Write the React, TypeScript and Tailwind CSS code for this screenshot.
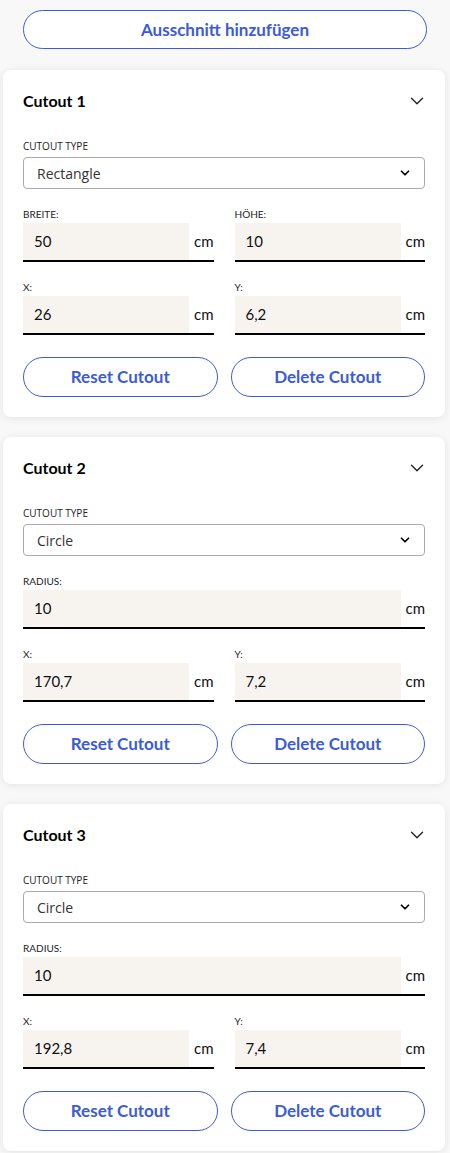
import { ChevronDown } from "lucide-react";

type Field = { label: string; value: string }
type Cutout = { id: number; type: string; rows: Field[][] }

const cutouts: Cutout[] = [
    { id: 1, type: "Rectangle", rows: [[{ label: "BREITE:", value: "50" }, { label: "HÖHE:", value: "10" }], [{ label: "X:", value: "26" }, { label: "Y:", value: "6,2" }]] },
    { id: 2, type: "Circle", rows: [[{ label: "RADIUS:", value: "10" }], [{ label: "X:", value: "170,7" }, { label: "Y:", value: "7,2" }]] },
    { id: 3, type: "Circle", rows: [[{ label: "RADIUS:", value: "10" }], [{ label: "X:", value: "192,8" }, { label: "Y:", value: "7,4" }]] },
]

const raleway = "font-['Lato','Open_Sans',sans-serif]"

function MeasureInput({ field }: { field: Field }) {
    return (
        <div className="flex flex-col">
            <p className={`${raleway} text-[10px] leading-[14px] text-[#222] mb-[2px]`}>{field.label}</p>
            <div className="flex flex-row items-center border-b-2 border-black">
                <div className="flex-1 h-[37px] bg-[#f7f4f0] flex items-center pl-[11px] text-[15px] text-[#111]">{field.value}</div>
                <span className="ml-[5px] text-[15px] text-[#111]">cm</span>
            </div>
        </div>
    )
}

function CutoutCard({ cutout }: { cutout: Cutout }) {
    return (
        <div className="bg-white rounded-lg shadow-[0_1px_8px_rgba(0,0,0,0.09)] px-5 pt-5 pb-5">
            <div className="flex flex-row justify-between items-center h-[22px]">
                <h2 className="text-base font-bold text-black">Cutout {cutout.id}</h2>
                <ChevronDown size={22} strokeWidth={1.5} className="text-[#222] -mr-[3px]" />
            </div>
            <p className="mt-[27px] text-[10px] leading-[14px] text-[#222] font-['Open_Sans',sans-serif]">CUTOUT TYPE</p>
            <div className="mt-1 h-8 border border-[#aaa] rounded flex flex-row items-center justify-between pl-[13px] pr-[12px] text-[14px] text-[#333] font-['Open_Sans',sans-serif]">
                <span>{cutout.type}</span>
                <ChevronDown size={14} strokeWidth={3} className="text-black" />
            </div>
            {cutout.rows.map((row, i) => (
                <div key={i} className={`mt-[18px] grid ${row.length === 2 ? "grid-cols-2" : "grid-cols-1"} gap-x-[21px]`}>
                    {row.map((f) => <MeasureInput key={f.label} field={f} />)}
                </div>
            ))}
            <div className="mt-[22px] grid grid-cols-2 gap-[13px]">
                <button className="h-10 rounded-full border border-[#3b5bd9] text-[#3b5bd9] font-bold text-[17px]">Reset Cutout</button>
                <button className="h-10 rounded-full border border-[#3b5bd9] text-[#3b5bd9] font-bold text-[17px]">Delete Cutout</button>
            </div>
        </div>
    )
}

export default function App() {
    return (
        <div className={`min-h-screen bg-[#f8f8f8] px-[3px] pt-[10px] pb-4 ${raleway}`}>
            <div className="px-5">
                <button className="w-full h-[39px] rounded-full border border-[#3b5bd9] text-[#3b5bd9] font-bold text-[17px] bg-white">Ausschnitt hinzufügen</button>
            </div>
            <div className="mt-[21px] flex flex-col gap-5 w-[442px]">
                {cutouts.map((c) => <CutoutCard key={c.id} cutout={c} />)}
            </div>
        </div>
    )
}
